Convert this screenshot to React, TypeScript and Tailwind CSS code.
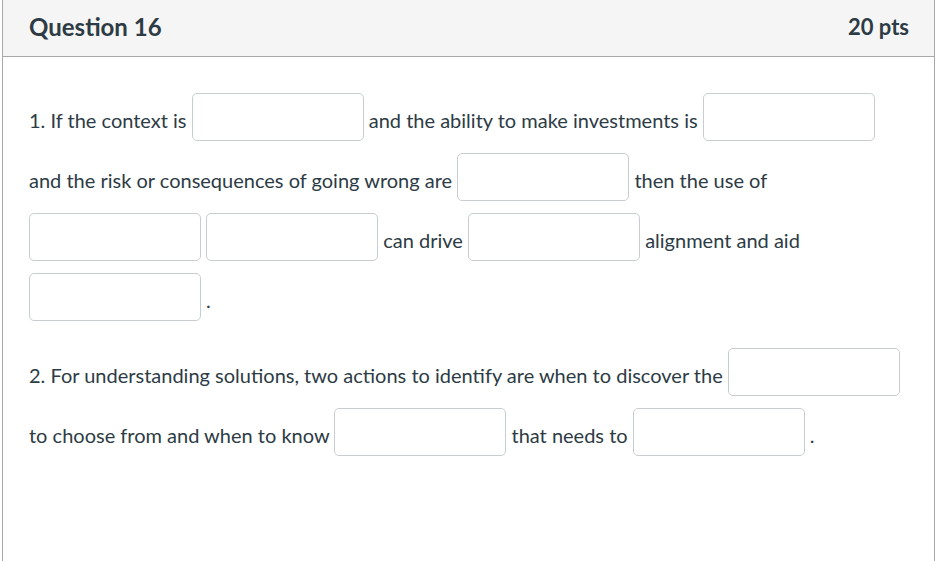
import React from 'react'

function Blank() {
  return (
    <span className="inline-block overflow-hidden align-[-13px]">
      <input
        type="text"
        aria-label="answer"
        className="block w-[172px] h-[48px] rounded-[5px] border border-[#c7cdd1] bg-white px-2 text-[18px] text-[#2d3b45] outline-none"
      />
    </span>
  )
}

export default function App() {
  return (
    <div className="w-[945px] h-[561px] overflow-hidden bg-white font-['Lato','Liberation_Sans',sans-serif] text-[#2d3b45]">
      <div className="ml-[2px] w-[933px] h-[600px] border-x border-[#a8a8a8]">
        {/* header */}
        <div className="flex items-center justify-between h-[57px] pb-[2px] bg-[#f5f5f5] border-b border-[#a8a8a8] pl-[26px] pr-[25px]">
          <h2 className="text-[24px] font-bold leading-none">Question 16</h2>
          <span className="text-[22px] font-bold leading-none">20 pts</span>
        </div>

        {/* body */}
        <div className="pl-[26px] pr-[30px] pt-[33px] text-[20px] leading-[60px]">
          <p className="mb-[15px]">
            1. If the context is <Blank /> and the ability to make investments is <Blank />{' '}
            and the risk or consequences of going wrong are <Blank /> then the use of{' '}
            <Blank /> <Blank /> can drive <Blank /> alignment and aid <Blank /> .
          </p>
          <p>
            2. For understanding solutions, two actions to identify are when to discover the <Blank />{' '}
            to choose from and when to know <Blank /> that needs to <Blank /> .
          </p>
        </div>
      </div>
    </div>
  )
}
